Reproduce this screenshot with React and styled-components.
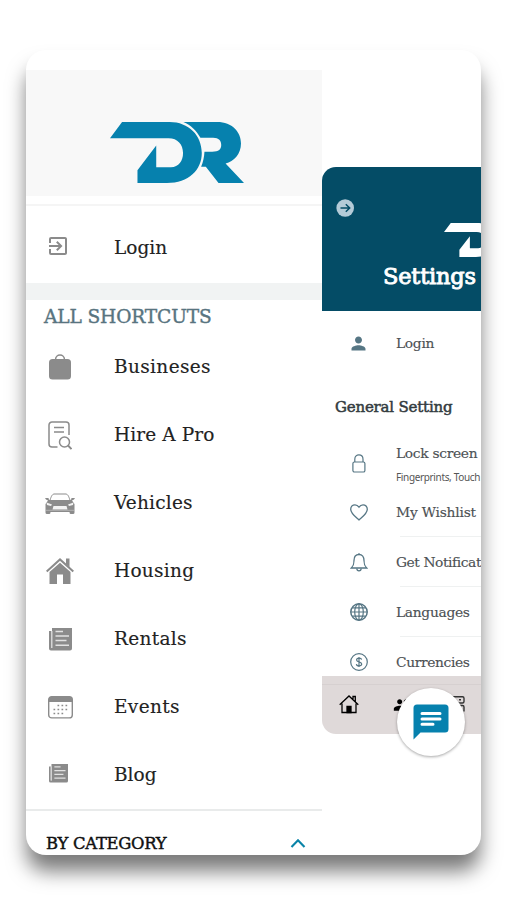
import React from 'react';
import styled, { createGlobalStyle } from 'styled-components';
import { MdExitToApp, MdPerson, MdPeople } from 'react-icons/md';

const GlobalStyle = createGlobalStyle`
*{
    box-sizing:border-box;
}
body{
    margin:0;
    background-color:white;
    font-family:"DejaVu Serif","Liberation Serif",serif;
}
svg{
    display:block;
}
`
const Page = styled.div`
height:900px;
padding:50px 26px 45px;
overflow:hidden;
`
const Phone = styled.div`
width:455px;
height:805px;
display:flex;
align-items:flex-start;
overflow:hidden;
border-radius:20px;
background-color:white;
box-shadow:0 17px 20px -1px rgba(0,0,0,0.53);
`
const Drawer = styled.div`
width:296px;
padding-top:20px;
flex-shrink:0;
`
const Brand = styled.div`
height:126px;
padding:52px 0 0 84px;
background-color:#f8f8f8;
`
const LoginBox = styled.div`
margin-top:8px;
height:79px;
padding-top:6px;
border-top:2px solid #f5f5f5;
`
const Band = styled.div`
height:17px;
background-color:#f1f3f3;
`
const Shortcuts = styled.div`
height:33px;
padding-left:18px;
line-height:33px;
font-size:18.6px;
letter-spacing:-0.14px;
color:#587480;
-webkit-text-stroke:0.4px #587480;
white-space:nowrap;
`
const Row = styled.div`
height:68px;
display:flex;
align-items:center;
color:#8b8b8b;
`
const IconBox = styled.div`
width:68px;
flex-shrink:0;
display:flex;
justify-content:center;
padding-right:${props=>props.$shift||0}px;
padding-bottom:${props=>props.$lift||0}px;
`
const RowText = styled.p`
margin:${props=>props.$drop||0}px 0 0 20px;
font-size:18.5px;
line-height:24px;
letter-spacing:${props=>props.$spacing}px;
color:#222;
-webkit-text-stroke:0.15px #222;
white-space:nowrap;
`
const Category = styled.div`
height:64px;
display:flex;
align-items:center;
justify-content:space-between;
padding:2px 16px 0 20px;
border-top:2px solid #e9ebeb;
font-size:16.4px;
letter-spacing:-0.27px;
color:#111;
-webkit-text-stroke:0.45px #111;
white-space:nowrap;
`
const Settings = styled.div`
width:159px;
height:567px;
margin-top:117px;
flex-shrink:0;
overflow:hidden;
border-radius:14px 0 0 14px;
`
const Header = styled.div`
height:144px;
padding:32px 0 0 14px;
background-color:#044c66;
color:white;
overflow:hidden;
`
const HeaderLogo = styled.div`
margin:6px 0 0 108px;
`
const Title = styled.h1`
margin:2px 0 0 47px;
font-size:22.5px;
line-height:34px;
letter-spacing:-0.2px;
font-weight:normal;
-webkit-text-stroke:0.9px white;
white-space:nowrap;
`
const Subtitle = styled.h2`
margin:0;
height:64px;
padding-left:13px;
line-height:64px;
font-size:15px;
letter-spacing:-0.2px;
font-weight:normal;
color:#333b40;
-webkit-text-stroke:0.5px #333b40;
white-space:nowrap;
`
const SettingList = styled.div`
height:237px;
overflow:hidden;
`
const SettingRow = styled.div`
height:${props=>props.$height}px;
display:flex;
align-items:center;
color:#567684;
`
const SettingIcon = styled.div`
width:74px;
flex-shrink:0;
display:flex;
justify-content:center;
padding-right:1px;
`
const SettingBody = styled.div`
width:85px;
height:100%;
display:flex;
flex-direction:column;
justify-content:center;
background:${props=>props.$line?"linear-gradient(#eff1f1,#eff1f1) 4px 100%/81px 1px no-repeat":"none"};
`
const SettingText = styled.div`
font-size:13.8px;
line-height:20px;
letter-spacing:${props=>props.$spacing}px;
color:#4d5154;
-webkit-text-stroke:0.15px #4d5154;
white-space:nowrap;
`
const Small = styled.div`
margin-top:4px;
font-family:"Noto Sans",sans-serif;
font-size:10px;
line-height:20px;
letter-spacing:-0.35px;
color:#555;
white-space:nowrap;
`
const LockBody = styled(SettingBody)`
padding-top:3px;
`
const TabBar = styled.div`
height:58px;
display:flex;
padding-left:17px;
background:linear-gradient(#d6d0d0,#d6d0d0) 0 8px/100% 1px no-repeat #dfd9d9;
`
const Tab = styled.div`
width:${props=>props.$width}px;
padding-top:19px;
`
const Fab = styled.div`
position:absolute;
left:75px;
top:12px;
width:68px;
height:68px;
display:flex;
align-items:center;
justify-content:center;
border-radius:50%;
background-color:white;
box-shadow:0 1px 3px rgba(0,0,0,0.35);
color:#0681ae;
`
const FabLayer = styled.div`
position:relative;
height:0;
margin-top:-58px;
`
const RightSide = styled.div`
width:159px;
`

const Logo = ({width,height,color}) => (
    <svg width={width} height={height} viewBox="0 0 400 181" preserveAspectRatio="none" fill={color}>
        <path d="M36 0H178C235 0 274 40 274 92C274 142 235 181 170 181H82V143L138 70V134H182C205 134 218 116 218 92C218 66 202 48 175 48H0Z" />
        <path d="M219 0H320C365 0 391 30 391 64C391 95 370 118 345 123L400 181H324L286 133H272C278 118 281 104 282 88H305C325 88 332 80 332 68C332 56 325 47 308 47H270C258 25 242 10 219 0Z" />
    </svg>
)

const Bag = () => (
    <svg width="22" height="26" viewBox="0 0 22 26" fill="currentColor">
        <rect y="5" width="22" height="20.5" rx="3.5" />
        <path d="M6.5 6C6.5 -0.6 15.5 -0.6 15.5 6" fill="none" stroke="currentColor" strokeWidth="1.5" />
    </svg>
)

const SearchDoc = () => (
    <svg width="24" height="29" viewBox="0 0 24 29" fill="none" stroke="currentColor" strokeWidth="1.5">
        <path d="M9.5 26H4A3 3 0 0 1 1 23V4A3 3 0 0 1 4 1H18A3 3 0 0 1 21 4V14" />
        <path d="M6 6.5H16M6 11H16" />
        <circle cx="16.5" cy="21" r="5" />
        <path d="M20 24.5L23.5 28" strokeWidth="1.9" />
    </svg>
)

const Car = () => (
    <svg width="30" height="21" viewBox="0 0 30 21" fill="currentColor">
        <path d="M5 7C6.5 3 7 1.5 9 1H21C23 1.5 23.5 3 25 7" fill="none" stroke="currentColor" strokeWidth="1" />
        <path d="M0 5L3.5 5L4 7H26L26.5 5H30L29 6.5L27 7.5L29.5 11V19.5Q29.5 21 28 21H25.5Q24.5 21 24.5 19H5.5Q5.5 21 4.5 21H2Q.5 21 .5 19.5V11L3 7.500L1 6.5Z" />
        <path d="M8.500 13H21.500L22.500 16.500H7.500Z" fill="#f2f2f2" />
        <path d="M1.500 9.500L7 11.500L6 13L2 12ZM28.500 9.500L23 11.500L24 13L28 12Z" fill="#f2f2f2" />
        <path d="M1 17.300H29" fill="none" stroke="#c4c4c4" strokeWidth=".7" />
    </svg>
)

const House = () => (
    <svg width="28" height="26" viewBox="0 0 28 26" fill="currentColor">
        <path d="M0.7 13.500L14 1.400L27.3 13.500" fill="none" stroke="currentColor" strokeWidth="2" />
        <path d="M20 0.500H23.500V9L20 6Z" />
        <path d="M3.500 14L14 4.800L24.500 14V26H17V16.500H11V26H3.500Z" />
    </svg>
)

const News = ({size}) => (
    <svg width={size} height={size} viewBox="0 0 23 23" fill="currentColor">
        <path d="M3 0H23V20.5Q23 22.5 21 22.5H2Q0 22.500 0 20.5V3H2.200V20H3Z" />
        <path d="M2 3H3.500V20H2Z" fill="#d5d5d5" />
        <path d="M6.5 3.5H14M6.5 8H20M6.5 12.5H17.5M6.5 17.2H20" stroke="#e2e2e2" strokeWidth="1.5" />
    </svg>
)

const CalendarIcon = () => (
    <svg width="25" height="23" viewBox="0 0 25 23">
        <rect x=".7" y=".7" width="23.6" height="21.2" rx="3" fill="white" stroke="currentColor" strokeWidth="1.4" />
        <path d="M.7 6V4Q.7 .7 4 .7H21Q24.3 .7 24.3 4V6Z" fill="currentColor" />
        <path d="M9.5 9.5H21M5.5 13.5H21M5.5 17.5H16.5" stroke="currentColor" strokeWidth="1.7" strokeDasharray="1.7 2.3" />
    </svg>
)

const Chevron = () => (
    <svg width="16" height="10" viewBox="0 0 16 10" fill="none" stroke="#0a84a8" strokeWidth="2.1">
        <path d="M1.5 9L8 2.2L14.5 9" />
    </svg>
)

const BackArrow = () => (
    <svg width="18" height="18" viewBox="0 0 18 18">
        <circle cx="9.200" cy="9" r="8.800" fill="#b4cbd8" />
        <path d="M4.500 9H13.5M9.8 5.200L13.7 9L9.8 12.800" fill="none" stroke="#044c66" strokeWidth="1.5" />
    </svg>
)

const Lock = () => (
    <svg width="14" height="19" viewBox="0 0 14 19" fill="none" stroke="currentColor" strokeWidth="1.2">
        <rect x=".9" y="8" width="12" height="10" rx="1.6" />
        <path d="M2.8 8V5.2C2.8 -0.6 11 -0.6 11 5.2V8" />
    </svg>
)

const Heart = () => (
    <svg width="18" height="17" viewBox="0 0 18 17" fill="none" stroke="currentColor" strokeWidth="1.3">
        <path d="M9 3.2C7.8 1.4 6.5 .8 5 .8C2.6 .8 .7 2.7 .7 5.3C.7 9.5 5 12.5 9 16C13 12.5 17.3 9.5 17.3 5.3C17.3 2.7 15.4 .8 13 .8C11.5 .8 10.2 1.4 9 3.2Z" />
    </svg>
)

const Bell = () => (
    <svg width="18" height="19" viewBox="0 0 18 19" fill="none" stroke="currentColor" strokeWidth="1.3">
        <path d="M9 1.5C5.7 1.5 4 4 4 7.5C4 11.8 3.3 12.6 1.3 15H16.7C14.7 12.6 14 11.8 14 7.5C14 4 12.3 1.5 9 1.5Z" />
        <path d="M8 1.2H10M6.8 15.5C7 18.7 11 18.7 11.2 15.5" />
    </svg>
)

const Globe = () => (
    <svg width="18" height="18" viewBox="0 0 18 18" fill="none" stroke="currentColor" strokeWidth="1.200">
        <circle cx="9" cy="9" r="8.2" strokeWidth="1.500" />
        <ellipse cx="9" cy="9" rx="4.3" ry="8.2" />
        <path d="M9 1V17M.8 9H17.2M2.2 4.8H15.8M2.2 13.2H15.8" />
    </svg>
)

const Dollar = () => (
    <svg width="18" height="18" viewBox="0 0 18 18" fill="none" stroke="currentColor" strokeWidth="1.2">
        <circle cx="9" cy="9" r="8.3" />
        <path d="M11.6 6.6C11.3 4.5 6.6 4.5 6.6 6.9C6.6 9.3 11.7 8.4 11.7 11C11.7 13.5 6.6 13.5 6.4 11.1M9 4V14" />
    </svg>
)

const TabHouse = () => (
    <svg width="20" height="19" viewBox="0 0 20 19" fill="none" stroke="black" strokeWidth="1.3">
        <path d="M.7 9.8L10 1L19.3 9.8M3 8.5V17.5H17V8.5M14 4V1.5H16.3V6.5" />
        <path d="M8 17.5V11.5H12V17.5Z" fill="black" />
    </svg>
)

const TabCards = () => (
    <svg width="18" height="18" viewBox="0 0 18 18" fill="none" stroke="#333" strokeWidth="1.4">
        <path d="M1 1.700H14.500Q16 1.700 16 3.200V6.500Q16 8 14.500 8H1M1 10.500H14.500Q16 10.500 16 12V16.500M11 4.800H13" />
    </svg>
)

const Chat = () => (
    <svg width="36" height="36" viewBox="0 0 36 36" fill="currentColor">
        <path d="M4 0.500H32Q35.500 0.500 35.500 4V25Q35.500 28.500 32 28.500H7.500L0.500 35.500V4Q0.500 0.500 4 0.500Z" />
        <path d="M9 9.500H27M9 15H27M9 20.300H20" fill="none" stroke="white" strokeWidth="3" strokeLinecap="round" />
    </svg>
)

const shortcuts = [
    {name:"Busineses",icon:<Bag />,spacing:0.36},
    {name:"Hire A Pro",icon:<SearchDoc />,spacing:0.12},
    {name:"Vehicles",icon:<Car />,spacing:0.2},
    {name:"Housing",icon:<House />,spacing:0.28},
    {name:"Rentals",icon:<News size={23} />,spacing:0.3},
    {name:"Events",icon:<CalendarIcon />,spacing:0.35},
    {name:"Blog",icon:<News size={19} />,spacing:0,shift:4,lift:4},
]

const settings = [
    {name:"My Wishlist",icon:<Heart />,spacing:-0.2},
    {name:"Get Notificat",icon:<Bell />,spacing:-0.42},
    {name:"Languages",icon:<Globe />,spacing:-0.3},
    {name:"Currencies",icon:<Dollar />,spacing:-0.36},
]

const App = () => {
    return (
        <Page>
            <GlobalStyle />
            <Phone>
                <Drawer>
                    <Brand><Logo width={134} height={61} color="#0681ae" /></Brand>
                    <LoginBox>
                        <Row>
                            <IconBox $shift={4}><MdExitToApp size={24} /></IconBox>
                            <RowText $spacing={0} $drop={4}>Login</RowText>
                        </Row>
                    </LoginBox>
                    <Band />
                    <Shortcuts>ALL SHORTCUTS</Shortcuts>
                    {shortcuts.map(item=><Row key={item.name}>
                        <IconBox $shift={item.shift} $lift={item.lift}>{item.icon}</IconBox>
                        <RowText $spacing={item.spacing}>{item.name}</RowText>
                    </Row>)}
                    <Category>BY CATEGORY<Chevron /></Category>
                </Drawer>
                <RightSide>
                    <Settings>
                        <Header>
                            <BackArrow />
                            <HeaderLogo><Logo width={75} height={34} color="white" /></HeaderLogo>
                            <Title>Settings</Title>
                        </Header>
                        <SettingRow $height={64}>
                            <SettingIcon><MdPerson size={21} /></SettingIcon>
                            <SettingBody><SettingText $spacing={-0.3}>Login</SettingText></SettingBody>
                        </SettingRow>
                        <Subtitle>General Setting</Subtitle>
                        <SettingList>
                            <SettingRow $height={48}>
                                <SettingIcon><Lock /></SettingIcon>
                                <LockBody>
                                    <SettingText $spacing={-0.3}>Lock screen</SettingText>
                                    <Small>Fingerprints, Touch</Small>
                                </LockBody>
                            </SettingRow>
                            {settings.map(item=><SettingRow key={item.name} $height={50}>
                                <SettingIcon>{item.icon}</SettingIcon>
                                <SettingBody $line><SettingText $spacing={item.spacing}>{item.name}</SettingText></SettingBody>
                            </SettingRow>)}
                        </SettingList>
                        <TabBar>
                            <Tab $width={54}><TabHouse /></Tab>
                            <Tab $width={55}><MdPeople size={20} color="black" /></Tab>
                            <Tab $width={20}><TabCards /></Tab>
                        </TabBar>
                    </Settings>
                    <FabLayer>
                        <Fab><Chat /></Fab>
                    </FabLayer>
                </RightSide>
            </Phone>
        </Page>
    )
}

export default App
